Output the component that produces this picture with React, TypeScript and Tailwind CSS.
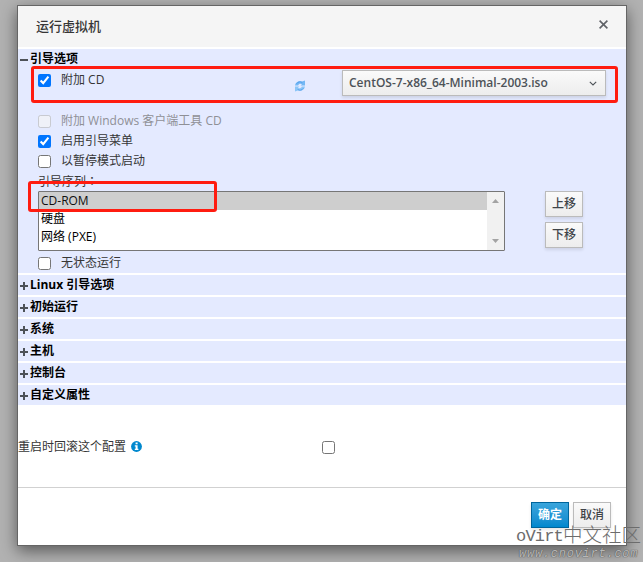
import React from 'react';

interface CheckRowProps {
    label: string;
    checked?: boolean;
    disabled?: boolean;
}

const CheckRow: React.FC<CheckRowProps> = ({label, checked, disabled}) => {
    return (
        <label className="flex h-5 items-center pl-5">
            <input type="checkbox" defaultChecked={checked} disabled={disabled} className="h-[13px] w-[13px] shrink-0"/>
            <span className={disabled ? 'ml-2.5 text-[#8f9096]' : 'ml-2.5 text-[#363636]'}>{label}</span>
        </label>
    );
};

const SectionTitle: React.FC<{title: string; open?: boolean}> = ({title, open}) => {
    return (
        <div className="flex h-5 items-center pl-0.5 font-bold text-black">
            <svg width="8" height="8" viewBox="0 0 8 8" className="mt-0.5 mr-0.5 shrink-0" shapeRendering="crispEdges">
                <path d="M0 3h8v2H0z" fill="#4d5258"/>
                {!open && <path d="M3 0h2v8H3z" fill="#4d5258"/>}
            </svg>
            {title}
        </div>
    );
};

const buttonClass =
    'flex h-[26px] w-[38px] items-center justify-center border border-[#bbb] bg-linear-to-b from-[#fafafa] to-[#ededed] font-medium text-[#3f4449] shadow-[0_2px_3px_rgba(3,3,3,0.1)]';

const RefreshIcon = () => (
    <svg width="12" height="12" viewBox="0 0 12 12">
        <path d="M1 5.4C1.4 2.2 4.6.2 8 1.6L11 .6v5H6.6L8 4.3C6.4 3.3 4.6 3.8 4.2 5.4z" fill="#74b8f5"/>
        <path d="M11 6.6C10.6 9.8 7.4 11.8 4 10.4L1 11.4v-5h4.4L4 7.7C5.6 8.7 7.4 8.2 7.8 6.6z" fill="#8cc6f8"/>
        <path d="M2.6 3.8C4 1.5 6.4 1.3 8.4 2.6M9.4 8.2C8 10.5 5.6 10.7 3.6 9.4" fill="none" stroke="#4a98e6" strokeWidth=".8"/>
    </svg>
);

const sections = ['Linux 引导选项', '初始运行', '系统', '主机', '控制台', '自定义属性'];

export default function App() {
    return (
        <div className='relative h-[562px] w-[643px] overflow-hidden bg-[#b2b2b2] pt-[5px] pl-[17px] font-["Open_Sans","Noto_Sans_CJK_SC",sans-serif] text-xs leading-[18px]'>
            <div className="flex h-[541px] w-[610px] flex-col border border-[#656565] bg-white shadow-[0_5px_15px_rgba(0,0,0,0.5)]">
                <header className="flex h-[41px] shrink-0 items-center justify-between bg-[#f5f5f5] pr-[18px] pb-0.5 pl-[18px]">
                    <h1 className="text-[13px] font-medium text-[#363636]">运行虚拟机</h1>
                    <svg width="9" height="9" viewBox="0 0 9 9" className="-mt-0.5">
                        <path d="M.6.6l7.8 7.8M8.4.6L.6 8.4" stroke="#5f6267" strokeWidth="1.6"/>
                    </svg>
                </header>

                <main className="mt-0.5 flex flex-col gap-0.5">
                    <section className="h-56 bg-[#e4eaff]">
                        <SectionTitle title="引导选项" open/>
                        <div className="flex h-[42px] items-start">
                            <div className="w-[276px] pt-px">
                                <CheckRow label="附加 CD" checked/>
                            </div>
                            <div className="w-12 pt-[11px]">
                                <RefreshIcon/>
                            </div>
                            <button className="mt-px flex h-[26px] w-[264px] items-center justify-between border border-[#bbb] bg-linear-to-b from-[#fafafa] to-[#ededed] pr-2 pl-1.5 font-semibold text-[#4d5258] shadow-[0_2px_3px_rgba(3,3,3,0.1)]">
                                <span>CentOS-7-x86_64-Minimal-2003.iso</span>
                                <svg width="8" height="5" viewBox="0 0 8 5">
                                    <path d="M.8.8L4 4 7.2.8" fill="none" stroke="#4d5258" strokeWidth="1.1"/>
                                </svg>
                            </button>
                        </div>
                        <CheckRow label="附加 Windows 客户端工具 CD" disabled/>
                        <CheckRow label="启用引导菜单" checked/>
                        <CheckRow label="以暂停模式启动"/>
                        <div className="h-5 pt-px pl-5 text-[#363636]">
                            引导序列<span className='font-["Noto_Sans_CJK_TC",sans-serif]'>：</span>
                        </div>
                        <div className="flex pl-5">
                            <div className="flex h-[60px] w-[467px] rounded-[1px] border border-[#767676] bg-white text-black">
                                <ul className="flex-1">
                                    <li className="h-[18px] bg-[#cecece] pl-0.5 text-[#101010]">CD-ROM</li>
                                    <li className="h-[18px] pl-0.5">硬盘</li>
                                    <li className="h-[18px] pl-0.5">网络 (PXE)</li>
                                </ul>
                                <div className="flex w-[17px] flex-col items-center justify-between bg-[#f1f1f1] py-[7px]">
                                    <svg width="7" height="4" viewBox="0 0 7 4">
                                        <path d="M0 4L3.5 0 7 4z" fill="#a3a3a3"/>
                                    </svg>
                                    <svg width="7" height="4" viewBox="0 0 7 4">
                                        <path d="M0 0h7L3.5 4z" fill="#a3a3a3"/>
                                    </svg>
                                </div>
                            </div>
                            <div className="ml-10 flex flex-col gap-[5px]">
                                <button className={buttonClass}>上移</button>
                                <button className={buttonClass}>下移</button>
                            </div>
                        </div>
                        <div className="pt-0.5">
                            <CheckRow label="无状态运行"/>
                        </div>
                    </section>
                    {sections.map((title) => (
                        <section key={title} className="bg-[#e4eaff]">
                            <SectionTitle title={title}/>
                        </section>
                    ))}
                </main>

                <div className="mt-8 flex h-5 items-center text-[#363636]">
                    <div className="flex w-[304px] items-center">
                        重启时回滚这个配置
                        <svg width="11" height="11" viewBox="0 0 11 11" className="-mt-px ml-[5px]">
                            <circle cx="5.5" cy="5.5" r="5.4" fill="#0088ce"/>
                            <path d="M4.6 1.6h2v1.6h-2zM3.8 4.2h2.8v3.6h.8V9H3.8V7.8h.8V5.4h-.8z" fill="#fff"/>
                        </svg>
                    </div>
                    <input type="checkbox" className="h-[13px] w-[13px]"/>
                </div>

                <footer className="mt-auto flex h-[58px] shrink-0 gap-1 border-t border-[#d1d1d1] pt-3.5 pl-[513px]">
                    <button className="flex h-[26px] w-[38px] items-center justify-center border border-[#00659c] bg-linear-to-b from-[#39a5dc] to-[#0088ce] font-semibold text-white shadow-[0_2px_3px_rgba(3,3,3,0.1)]">确定</button>
                    <button className={buttonClass}>取消</button>
                </footer>
            </div>

            {/* highlight frames */}
            <div className="absolute top-[66px] left-[31px] h-[37px] w-[587px] rounded-[3px] border-3 border-[#ff1c10]"/>
            <div className="absolute top-[181px] left-[28px] h-[31px] w-[189px] rounded-[3px] border-3 border-[#ff1c10]"/>

            {/* watermark */}
            <div className="absolute top-[526px] left-[516px] whitespace-nowrap text-[#6c6c6c]">
                <div className='flex items-center font-["Liberation_Mono","Noto_Sans_CJK_SC",monospace] leading-[22px] font-light'>
                    <span className="text-[17px] tracking-[-0.8px]">oVirt</span>
                    <span className="text-[19.5px]">中文社区</span>
                </div>
                <div className='pl-[3px] font-["Liberation_Mono",monospace] text-[12px] leading-[13px] tracking-[0.75px] text-[#b8b8b8] italic [text-shadow:0_0_1px_#555,0_0_1px_#555]'>
                    www.cnovirt.com
                </div>
            </div>
        </div>
    );
}
